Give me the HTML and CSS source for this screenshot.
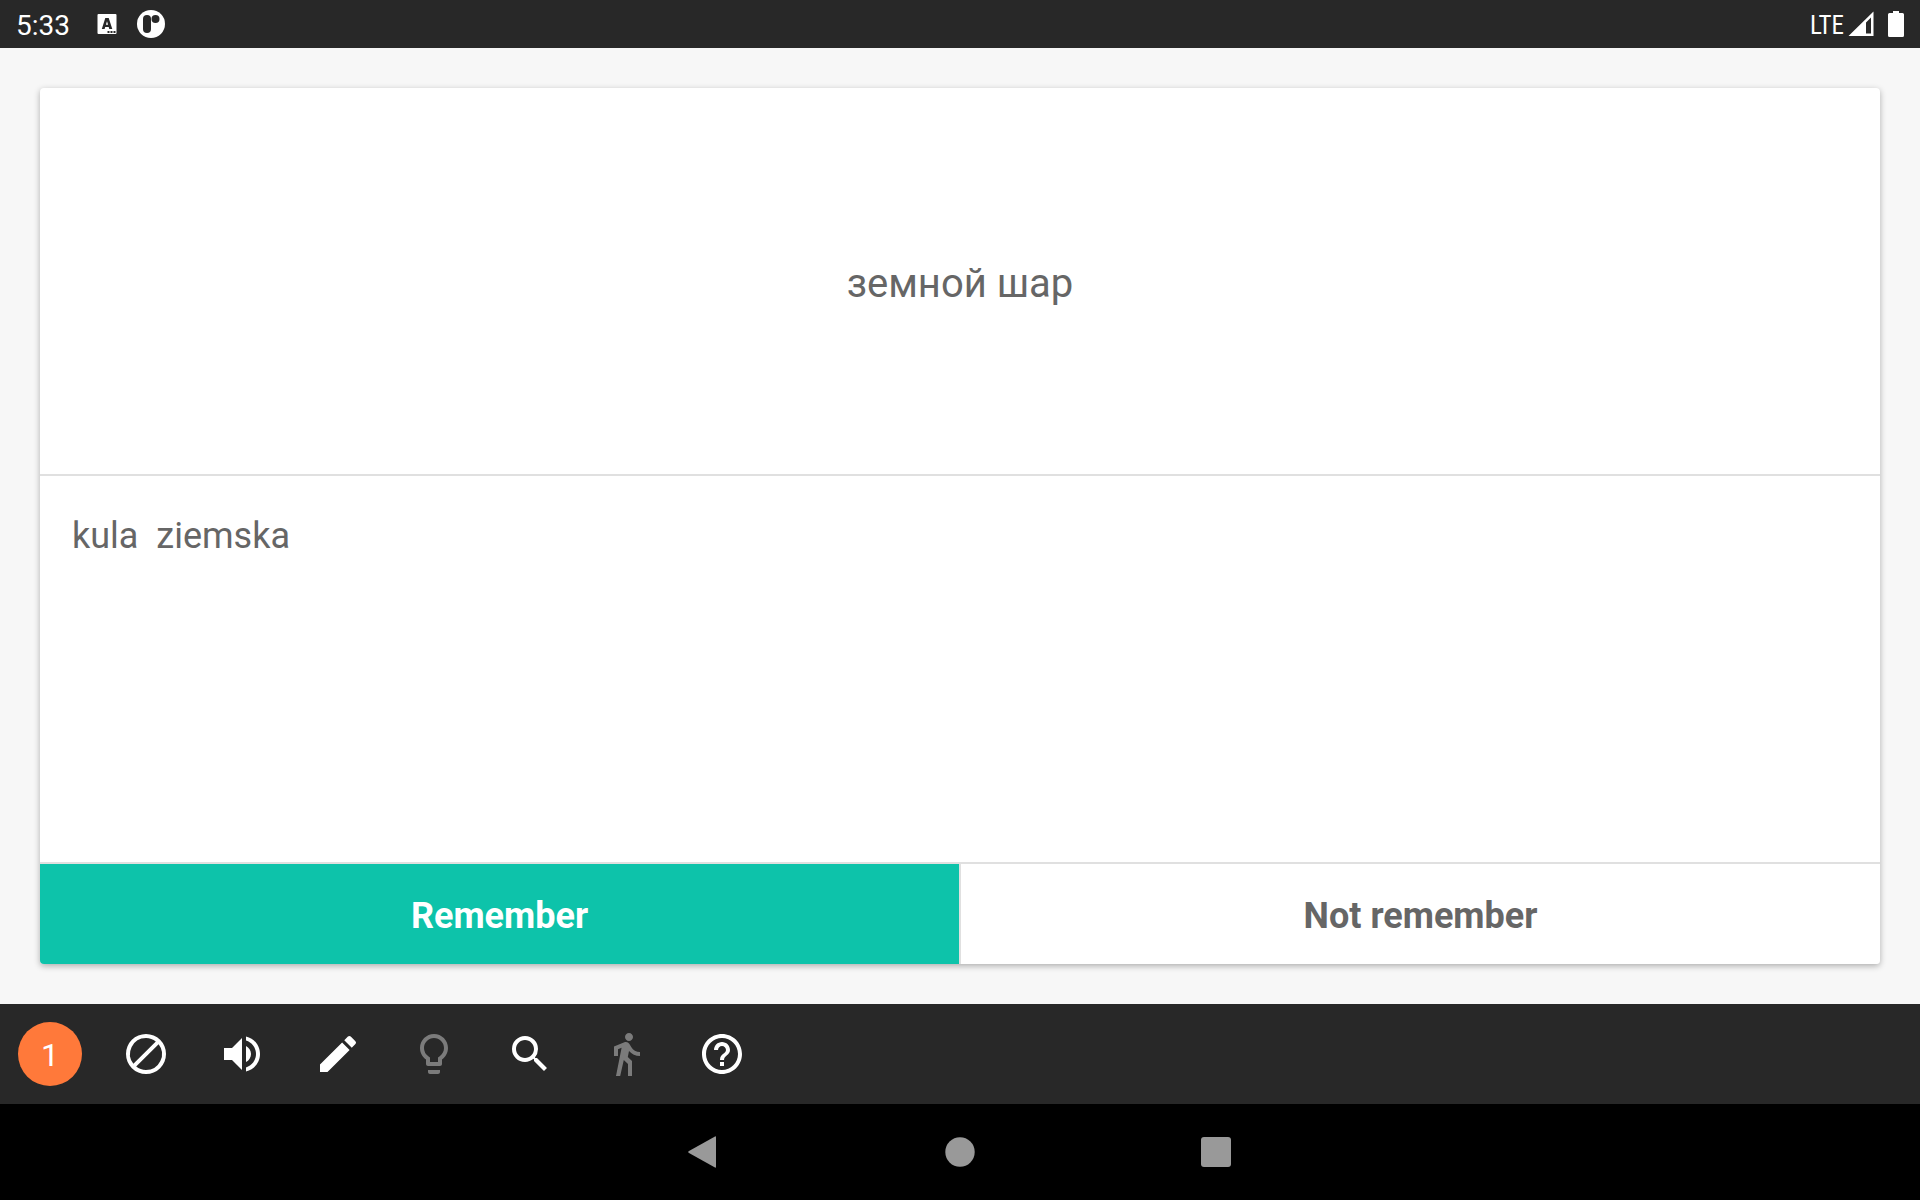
FILE: index.html
```html
<!DOCTYPE html>
<html lang="en">
<head>
<meta charset="utf-8">
<meta name="viewport" content="width=device-width, initial-scale=1">
<title>Flashcards</title>
<link rel="stylesheet" href="styles.css">
</head>
<body>
<header class="status">
  <div class="status-left">
    <time class="clock">5:33</time>
    <svg class="icon-app" viewBox="0 0 20 22"><path fill="#fff" d="M1.500 1h17a1 1 0 0 1 1 1v18a1 1 0 0 1-1 1h-17a1 1 0 0 1-1-1V2a1 1 0 0 1 1-1z"/><path fill="#282828" fill-rule="evenodd" d="M8.300 5h3.400L15.300 16h-3l-.6-2H8.200l-.6 2H4.800zM10 8.200L8.900 11.800h2.200zM10.500 18h2v2h-2zM13.500 18h2v2h-2zM16.500 18h2v2h-2z"/></svg>
    <svg class="icon-round" viewBox="0 0 28 28"><circle cx="14" cy="14" r="14" fill="#fff"/><rect x="6" y="5" width="8" height="18" rx="4" fill="#282828"/><circle cx="18.500" cy="9" r="4" fill="#282828"/></svg>
  </div>
  <div class="status-right">
    <span class="network">LTE</span>
    <svg class="icon-signal" viewBox="0 0 26 26"><path fill="#fff" fill-rule="evenodd" d="M25.500 .5V25H.500zM23 6.500L18 11.500V22.500h5z"/></svg>
    <svg class="icon-battery" viewBox="0 0 16 26"><path fill="#fff" d="M5 0h6v2h3.500A1.500 1.500 0 0 1 16 3.500v21a1.500 1.500 0 0 1-1.500 1.500h-13A1.500 1.500 0 0 1 0 24.500v-21A1.500 1.500 0 0 1 1.500 2H5z"/></svg>
  </div>
</header>
<main class="stage">
  <article class="card">
    <section class="question" lang="ru">земной шар</section>
    <section class="answer" lang="pl">kula&nbsp; ziemska</section>
    <div class="choices">
      <button class="choice choice-yes" type="button">Remember</button>
      <button class="choice" type="button">Not remember</button>
    </div>
  </article>
</main>
<div class="toolbar" role="toolbar" aria-label="Card tools">
  <span class="count">1</span>
  <button class="tool" type="button" aria-label="Exclude"><svg viewBox="0 0 24 24"><path d="M12 2A10 10 0 1 0 12 22 10 10 0 0 0 12 2zM12 4c1.850 0 3.550.630 4.900 1.690L5.690 16.900A8 8 0 0 1 12 4zM12 20c-1.850 0-3.550-.630-4.900-1.690L18.310 7.100A8 8 0 0 1 12 20z"/></svg></button>
  <button class="tool" type="button" aria-label="Listen"><svg viewBox="0 0 24 24"><path d="M3 9v6h4l5 5V4L7 9H3zm13.500 3c0-1.770-1.020-3.290-2.500-4.030v8.050c1.480-.730 2.500-2.250 2.500-4.020zM14 3.230v2.060c2.890.860 5 3.540 5 6.710s-2.110 5.850-5 6.710v2.060c4.010-.910 7-4.490 7-8.770s-2.990-7.860-7-8.770z"/></svg></button>
  <button class="tool" type="button" aria-label="Edit"><svg viewBox="0 0 24 24"><path d="M3 17.250V21h3.750L17.810 9.940l-3.750-3.750L3 17.250zM20.710 7.040a1 1 0 0 0 0-1.410l-2.340-2.340a1 1 0 0 0-1.410 0l-1.830 1.830 3.750 3.750 1.830-1.830z"/></svg></button>
  <button class="tool" type="button" aria-label="Hint" disabled><svg viewBox="0 0 24 24"><path d="M9 21c0 .550.450 1 1 1h4c.550 0 1-.450 1-1v-1H9v1zm3-19C8.140 2 5 5.140 5 9c0 2.380 1.190 4.470 3 5.740V17c0 .550.450 1 1 1h6c.550 0 1-.450 1-1v-2.260c1.810-1.270 3-3.360 3-5.740 0-3.860-3.140-7-7-7zm2.850 11.100l-.850.600V16h-4v-2.300l-.850-.600A4.997 4.997 0 0 1 7 9c0-2.760 2.240-5 5-5s5 2.240 5 5c0 1.630-.800 3.160-2.150 4.100z"/></svg></button>
  <button class="tool" type="button" aria-label="Search"><svg viewBox="0 0 24 24"><path d="M15.500 14h-.790l-.280-.270A6.471 6.471 0 0 0 16 9.500 6.500 6.500 0 1 0 9.500 16c1.610 0 3.090-.590 4.230-1.570l.270.280v.790l5 4.990L20.490 19l-4.990-5zm-6 0C7.010 14 5 11.990 5 9.500S7.010 5 9.500 5 14 7.010 14 9.500 11.990 14 9.500 14z"/></svg></button>
  <button class="tool" type="button" aria-label="Skip" disabled><svg viewBox="0 0 24 24"><path d="M13.500 5.500c1.100 0 2-.900 2-2s-.900-2-2-2-2 .900-2 2 .900 2 2 2zM9.800 8.900L7 23h2.100l1.800-8 2.100 2v6h2v-7.500l-2.100-2 .6-3C14.800 12 16.800 13 19 13v-2c-1.900 0-3.500-1-4.300-2.400l-1-1.600c-.400-.600-1-1-1.700-1-.300 0-.500.100-.800.100L6 8.300V13h2V9.600l1.800-.7"/></svg></button>
  <button class="tool" type="button" aria-label="Help"><svg viewBox="0 0 24 24"><path d="M11 18h2v-2h-2v2zm1-16C6.480 2 2 6.480 2 12s4.480 10 10 10 10-4.480 10-10S17.520 2 12 2zm0 18c-4.410 0-8-3.590-8-8s3.590-8 8-8 8 3.590 8 8-3.590 8-8 8zm0-14c-2.210 0-4 1.790-4 4h2c0-1.100.900-2 2-2s2 .900 2 2c0 2-3 1.750-3 5h2c0-2.250 3-2.500 3-5 0-2.210-1.790-4-4-4z"/></svg></button>
</div>
<nav class="navbar" aria-label="System">
  <button class="nav" type="button" aria-label="Back"><svg viewBox="0 0 32 32"><path d="M27 .400Q28 0 28 1.200V30.800Q28 32 27 31.600L1 17Q-.6 16 1 15z"/></svg></button>
  <button class="nav" type="button" aria-label="Home"><svg viewBox="0 0 32 32"><circle cx="16" cy="16" r="14.700"/></svg></button>
  <button class="nav" type="button" aria-label="Overview"><svg viewBox="0 0 32 32"><rect x="1" y="1" width="30" height="30" rx="3"/></svg></button>
</nav>
</body>
</html>
```
FILE: styles.css
```css
* {
  box-sizing: border-box;
}

body {
  margin: 0;
  min-height: 100vh;
  display: flex;
  flex-direction: column;
  background: #f7f7f7;
  color: #666;
  font-family: Roboto, "Liberation Sans", sans-serif;
}

button {
  margin: 0;
  padding: 0;
  border: 0;
  background: none;
  font: inherit;
}

svg {
  display: block;
  flex: none;
}

.status {
  display: flex;
  justify-content: space-between;
  height: 48px;
  padding: 0 16px;
  background: #282828;
  color: #fff;
}

.status-left,
.status-right {
  display: flex;
  align-items: center;
}

.clock,
.network {
  padding-top: 2px;
}

.clock {
  margin-right: 27px;
  font-size: 28px;
}

.icon-app {
  width: 20px;
  height: 22px;
  margin-right: 20px;
}

.icon-round {
  width: 28px;
  height: 28px;
}

.network {
  margin-right: 4px;
  font-family: "Liberation Sans Narrow", "Roboto Condensed", Roboto, sans-serif;
  font-size: 25px;
}

.icon-signal {
  width: 26px;
  height: 26px;
  margin-right: 14px;
}

.icon-battery {
  width: 16px;
  height: 26px;
}

.stage {
  flex: 1;
  display: flex;
  padding: 40px;
}

.card {
  flex: 1;
  display: grid;
  grid-template-rows: 1fr 1fr auto;
  overflow: hidden;
  border-radius: 4px;
  background: #fff;
  box-shadow: 0 2px 6px rgba(0, 0, 0, 0.3);
}

.question,
.answer {
  border-bottom: 2px solid #e0e0e0;
}

.question {
  display: flex;
  align-items: center;
  justify-content: center;
  padding-top: 4px;
  font-size: 40px;
}

.answer {
  padding: 36px 32px;
  font-size: 36px;
  line-height: 48px;
}

.choices {
  display: flex;
  gap: 2px;
  background: #e0e0e0;
}

.choice {
  flex: 1;
  height: 100px;
  padding-top: 4px;
  background: #fff;
  color: #666;
  font-size: 36px;
  font-weight: 700;
}

.choice-yes {
  background: #0dc3aa;
  color: #fff;
}

.toolbar {
  display: flex;
  align-items: center;
  height: 100px;
  padding-left: 18px;
  background: #282828;
}

.count {
  width: 64px;
  height: 64px;
  margin-right: 16px;
  border-radius: 50%;
  background: #ff793a;
  color: #fff;
  font-size: 32px;
  line-height: 66px;
  text-align: center;
}

.tool {
  width: 96px;
  height: 96px;
  display: flex;
  align-items: center;
  justify-content: center;
  fill: #fff;
}

.tool:disabled {
  fill: #7b7b7b;
}

.tool svg {
  width: 48px;
  height: 48px;
}

.navbar {
  display: flex;
  justify-content: center;
  height: 96px;
  background: #000;
}

.nav {
  width: 256px;
  display: flex;
  align-items: center;
  justify-content: center;
  fill: #999;
}

.nav svg {
  width: 32px;
  height: 32px;
}
```
